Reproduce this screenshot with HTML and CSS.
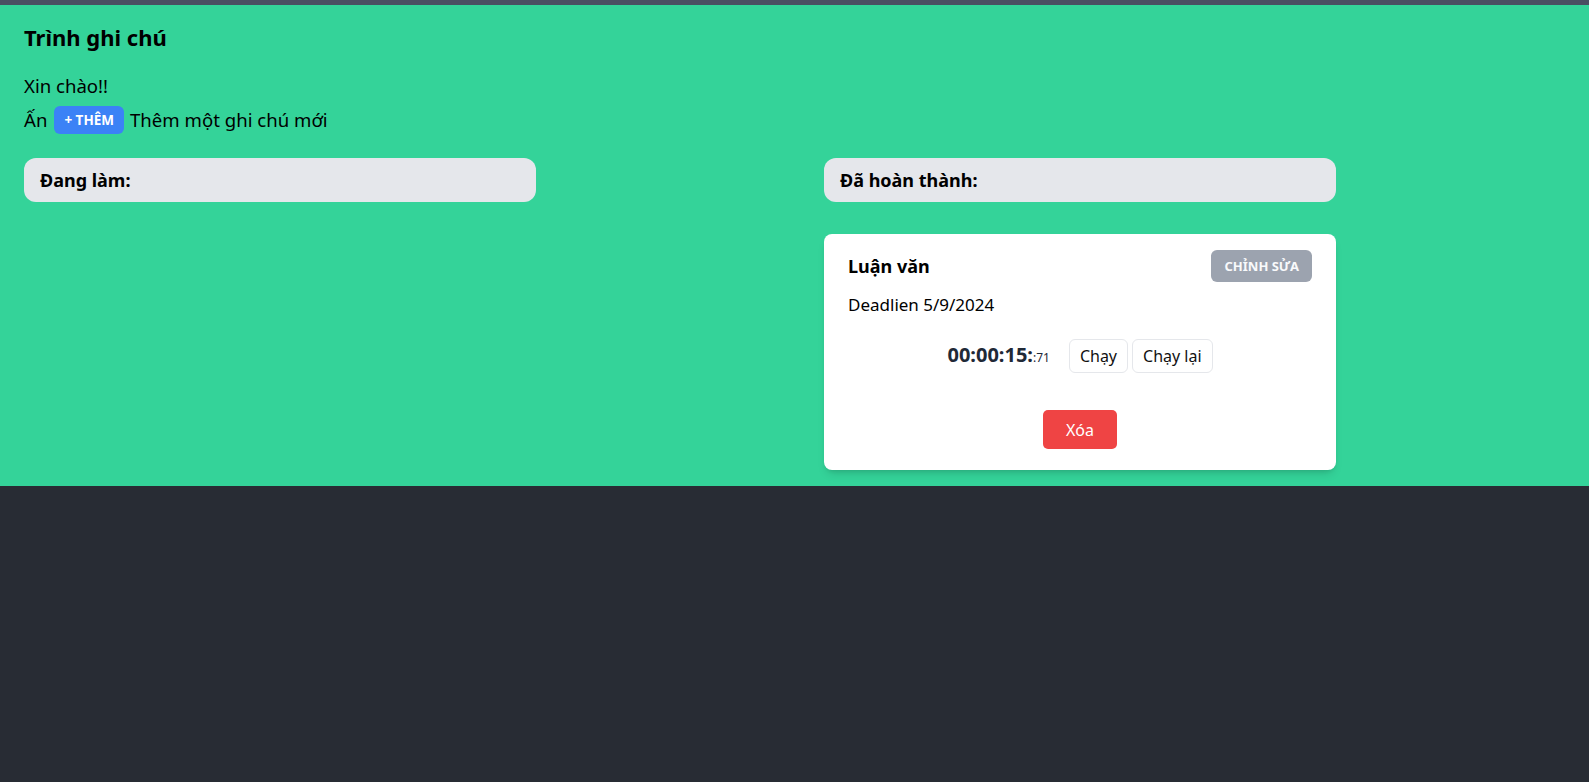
FILE: index.html
```html
<!DOCTYPE html>
<html lang="vi">
<head>
<meta charset="utf-8">
<title>Trình ghi chú</title>
<link rel="stylesheet" href="styles.css">
</head>
<body>
<div class="topbar"></div>
<main class="app">
  <h1 class="title">Trình ghi chú</h1>
  <p class="greet">Xin chào!!</p>
  <div class="hint">
    <span>Ấn</span>
    <button class="btn-add">+ Thêm</button>
    <span>Thêm một ghi chú mới</span>
  </div>
  <div class="columns">
    <section class="col">
      <div class="col-head">Đang làm:</div>
    </section>
    <section class="col">
      <div class="col-head">Đã hoàn thành:</div>
      <article class="card">
        <div class="card-head">
          <h2 class="card-title">Luận văn</h2>
          <button class="btn-edit">Chỉnh sửa</button>
        </div>
        <p class="deadline">Deadlien 5/9/2024</p>
        <div class="timer-row">
          <span class="timer">00:00:15:<small class="ms">:71</small></span>
          <div class="timer-btns">
            <button class="btn-ghost">Chạy</button>
            <button class="btn-ghost">Chạy lại</button>
          </div>
        </div>
        <div class="card-foot">
          <button class="btn-delete">Xóa</button>
        </div>
      </article>
    </section>
  </div>
</main>
</body>
</html>
```
FILE: styles.css
```css
* { box-sizing: border-box; }
html, body { margin: 0; padding: 0; }
body {
  background: #282c34;
  font-family: "Noto Sans", "DejaVu Sans", sans-serif;
  color: #000;
}
button { font-family: inherit; cursor: pointer; }
.topbar { height: 5px; background: #4a4f62; }
.app {
  background: #34d399;
  padding: 16px 24px 16px;
}
.title {
  margin: 0;
  font-size: 22px;
  line-height: 33px;
  font-weight: 700;
}
.greet {
  margin: 18px 0 0;
  font-size: 18.6px;
  line-height: 28px;
}
.hint {
  margin-top: 6px;
  display: flex;
  align-items: center;
  gap: 6px;
  font-size: 18.6px;
  line-height: 28px;
  height: 28px;
}
.btn-add {
  height: 28px;
  padding: 0 10px;
  border: 0;
  border-radius: 6px;
  background: #3b82f6;
  color: #fff;
  font-size: 13.5px;
  font-weight: 700;
  text-transform: uppercase;
  margin-left: 1px;
}
.columns {
  margin-top: 24px;
  display: grid;
  grid-template-columns: 1fr 1fr;
  column-gap: 59px;
  align-items: start;
}
.col { max-width: 512px; }
.col-head {
  height: 44px;
  background: #e5e7eb;
  border-radius: 12px;
  padding: 8px 16px;
  font-size: 18px;
  line-height: 28px;
  font-weight: 700;
}
.card {
  margin-top: 32px;
  background: #fff;
  border-radius: 8px;
  padding: 16px 24px 21px;
  box-shadow: 0 6px 10px -3px rgba(0,0,0,.15), 0 3px 5px -3px rgba(0,0,0,.12);
}
.card-head {
  display: flex;
  justify-content: space-between;
  align-items: center;
  height: 32px;
}
.card-title {
  margin: 0;
  font-size: 18px;
  line-height: 28px;
  font-weight: 700;
}
.btn-edit {
  height: 32px;
  padding: 0 13px;
  border: 0;
  border-radius: 6px;
  background: #9ca3af;
  color: #f9fafb;
  font-size: 13px;
  font-weight: 700;
  text-transform: uppercase;
}
.deadline {
  margin: 11px 0 0;
  font-size: 17px;
  line-height: 24px;
}
.timer-row {
  margin-top: 22px;
  display: flex;
  justify-content: center;
  align-items: center;
  gap: 19px;
}
.timer {
  font-size: 20px;
  font-weight: 700;
  color: #1f2937;
  line-height: 28px;
}
.ms { font-size: 12px; font-weight: 400; }
.timer-btns { display: flex; gap: 4px; }
.btn-ghost {
  height: 34px;
  padding: 0 10px;
  background: #fff;
  border: 1px solid #e5e7eb;
  border-radius: 6px;
  font-size: 16px;
  color: #111;
}
.card-foot {
  margin-top: 37px;
  display: flex;
  justify-content: center;
}
.btn-delete {
  width: 74px;
  height: 39px;
  border: 0;
  border-radius: 5px;
  background: #ef4444;
  color: #fff;
  font-size: 16px;
}
```
